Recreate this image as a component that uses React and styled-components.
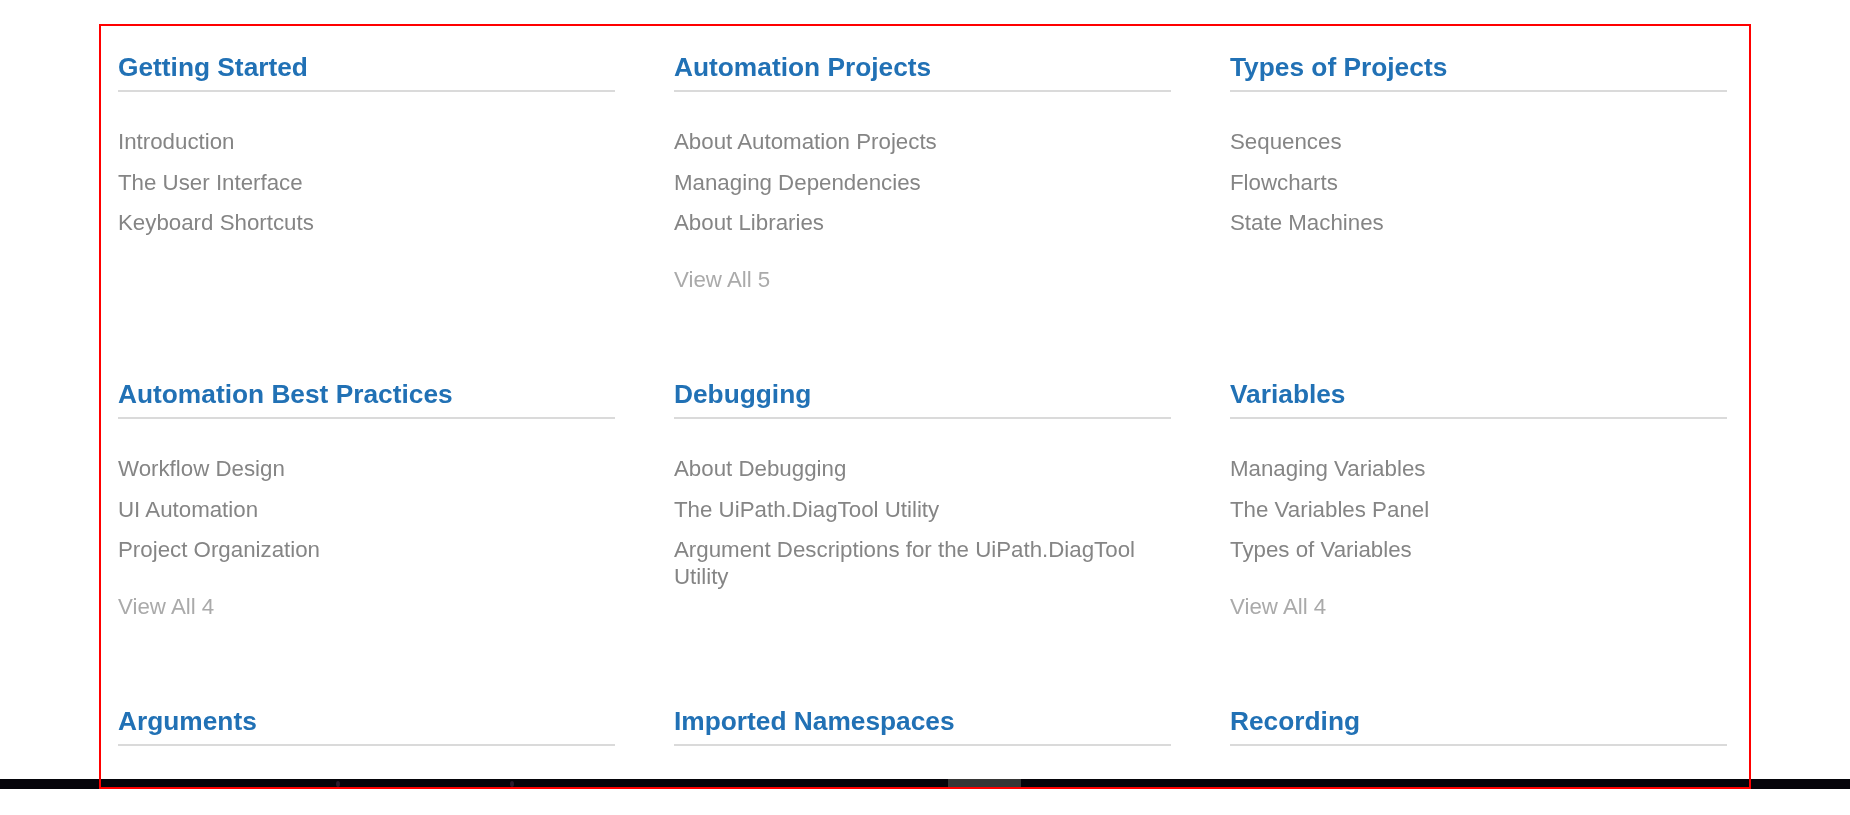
import React from "react";
import styled, { createGlobalStyle } from "styled-components";

const GlobalStyle = createGlobalStyle`
  html, body {
    margin: 0;
    padding: 0;
    background: #fff;
    height: 815px;
    overflow: hidden;
  }
  body {
    font-family: "Liberation Sans", Arial, Helvetica, sans-serif;
  }
`;

const Frame = styled.div`
  position: relative;
  z-index: 2;
  box-sizing: border-box;
  margin: 24px 0 0 99px;
  width: 1652px;
  height: 765px;
  border: 2px solid #ff0000;
  padding: 26px 22px 0 17px;
  overflow: hidden;
`;

const Grid = styled.div`
  display: grid;
  grid-template-columns: repeat(3, 497px);
  column-gap: 59px;
  row-gap: 86.5px;
  align-items: start;
`;

const Section = styled.section`
  display: flex;
  flex-direction: column;
`;

const Heading = styled.h2`
  margin: 0 0 36px;
  padding-bottom: 8px;
  border-bottom: 2px solid #dadada;
  font-size: 26.3px;
  line-height: 30px;
  font-weight: 700;
  color: #2171b5;
`;

const LinkList = styled.ul`
  list-style: none;
  margin: 0;
  padding: 0;
  display: flex;
  flex-direction: column;
  gap: 13.5px;
`;

const LinkItem = styled.li`
  font-size: 22.3px;
  line-height: 27px;
  color: ${props => props.$more ? "#aaaaaa" : "#858585"};
  margin-top: ${props => props.$more ? "16px" : "0"};
`;

// taskbar strip cut off at the bottom of the capture
const Taskbar = styled.div`
  position: fixed;
  left: 0;
  top: 779px;
  width: 1850px;
  height: 10px;
  background: #05040a;
  z-index: 1;
`;

const TaskbarTab = styled.span`
  position: absolute;
  top: 0;
  left: 948px;
  width: 73px;
  height: 10px;
  background: #363636;
`;

const TaskbarDot = styled.span`
  position: absolute;
  top: 2px;
  left: ${props => props.$x}px;
  width: 4px;
  height: 6px;
  border-radius: 50%;
  background: #2a1a2c;
`;

const sections = [
  {
    title: "Getting Started",
    links: ["Introduction", "The User Interface", "Keyboard Shortcuts"],
  },
  {
    title: "Automation Projects",
    links: ["About Automation Projects", "Managing Dependencies", "About Libraries"],
    more: "View All 5",
  },
  {
    title: "Types of Projects",
    links: ["Sequences", "Flowcharts", "State Machines"],
  },
  {
    title: "Automation Best Practices",
    links: ["Workflow Design", "UI Automation", "Project Organization"],
    more: "View All 4",
  },
  {
    title: "Debugging",
    links: [
      "About Debugging",
      "The UiPath.DiagTool Utility",
      "Argument Descriptions for the UiPath.DiagTool Utility",
    ],
  },
  {
    title: "Variables",
    links: ["Managing Variables", "The Variables Panel", "Types of Variables"],
    more: "View All 4",
  },
  { title: "Arguments", links: [] },
  { title: "Imported Namespaces", links: [] },
  { title: "Recording", links: [] },
];

export default function App() {
  return (
    <>
      <GlobalStyle />
      <Frame>
        <Grid>
          {sections.map(s => (
            <Section key={s.title}>
              <Heading>{s.title}</Heading>
              {s.links.length > 0 && (
                <LinkList>
                  {s.links.map(l => (
                    <LinkItem key={l}>{l}</LinkItem>
                  ))}
                  {s.more && <LinkItem $more>{s.more}</LinkItem>}
                </LinkList>
              )}
            </Section>
          ))}
        </Grid>
      </Frame>
      <Taskbar>
        <TaskbarDot $x={336} />
        <TaskbarDot $x={510} />
        <TaskbarTab />
      </Taskbar>
    </>
  );
}
